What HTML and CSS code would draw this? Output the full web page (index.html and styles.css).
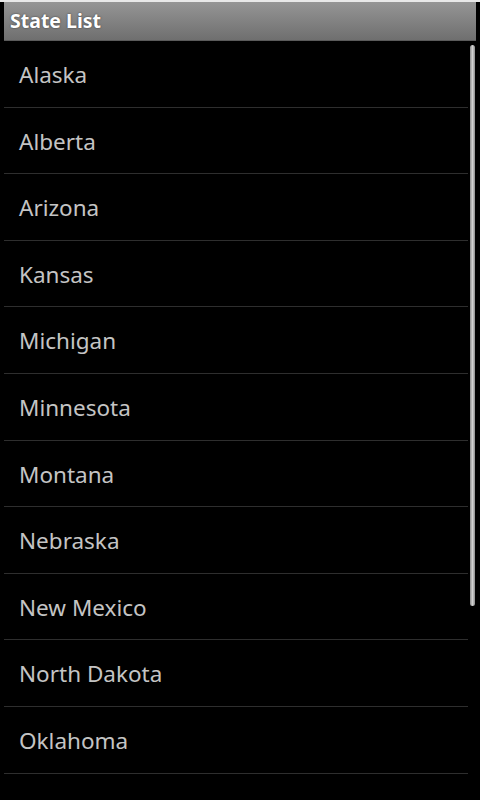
FILE: index.html
```html
<!DOCTYPE html>
<html lang="en">
<head>
<meta charset="UTF-8">
<meta name="viewport" content="width=device-width, initial-scale=1.0">
<title>State List</title>
<link rel="stylesheet" href="styles.css">
</head>
<body>

<div class="screen">
    <div class="title-bar">State List</div>

    <div class="list-wrap">
        <ul class="state-list">
            <li>Alaska</li>
            <li>Alberta</li>
            <li>Arizona</li>
            <li>Kansas</li>
            <li>Michigan</li>
            <li>Minnesota</li>
            <li>Montana</li>
            <li>Nebraska</li>
            <li>New Mexico</li>
            <li>North Dakota</li>
            <li>Oklahoma</li>
        </ul>
        <div class="scrollbar"></div>
    </div>
</div>

</body>
</html>
```

FILE: styles.css
```css
html, body {
    margin: 0;
    padding: 0;
    height: 800px;
    overflow: hidden;
    background-color: #000;
}
.screen {
    height: 800px;
    border-top: 2px solid #e8e8e8;
    padding: 0 4px;
    box-sizing: border-box;
    font-family: "Noto Sans", "Open Sans", sans-serif;
}
.title-bar {
    height: 39px;
    line-height: 38px;
    padding-left: 6px;
    color: #fff;
    font-size: 19.5px;
    font-weight: bold;
    background: linear-gradient(#959595, #6f6f6f);
    border-bottom: 1px solid #5a5a5a;
    box-sizing: border-box;
    text-shadow: 0 0 2px rgba(0, 0, 0, 0.6);
}
.list-wrap {
    position: relative;
}
.state-list {
    list-style: none;
    margin: 0;
    padding: 0 8px 0 0;
}
.state-list li {
    height: 66.6px;
    line-height: 68px;
    padding-left: 15px;
    font-size: 22.5px;
    color: #c4c4c4;
    border-bottom: 1px solid #2e2e2e;
    box-sizing: border-box;
}
.scrollbar {
    position: absolute;
    top: 4px;
    right: 1px;
    width: 5px;
    height: 561px;
    border-radius: 3px;
    background: linear-gradient(to right, #8a8a8a, #d0d0d0, #8a8a8a);
}
```
